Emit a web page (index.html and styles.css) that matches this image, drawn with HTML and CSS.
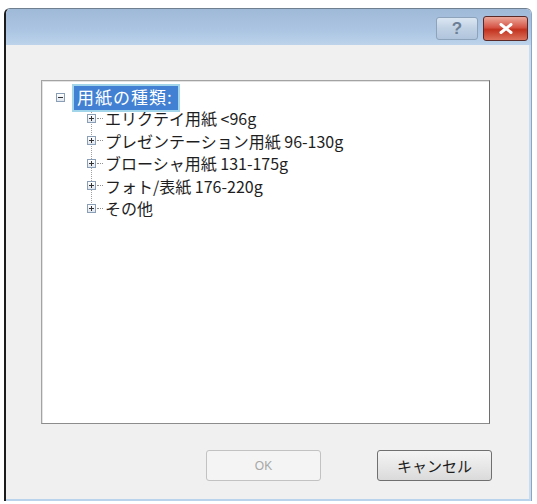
FILE: index.html
```html
<!DOCTYPE html>
<html lang="ja">
<head>
    <meta charset="UTF-8">
    <title>用紙の種類</title>
    <link rel="stylesheet" href="styles.css">
</head>
<body>

    <div class="window">
        <div class="titlebar">
            <div class="tb-btn help">?</div>
            <div class="tb-btn close">
                <svg width="14" height="11" viewBox="0 0 14 11">
                    <path d="M2 1.5 L12 9.5 M12 1.5 L2 9.5" stroke="#fff" stroke-width="3" stroke-linecap="round"/>
                </svg>
            </div>
        </div>

        <div class="content">
            <div class="tree">
                <div class="root-row">
                    <span class="expander minus"></span>
                    <span class="root-label">用紙の種類:</span>
                </div>
                <ul class="children">
                    <li><span class="expander plus"></span><span class="dash"></span><span class="item">エリクテイ用紙 &lt;96g</span></li>
                    <li><span class="expander plus"></span><span class="dash"></span><span class="item">プレゼンテーション用紙 96-130g</span></li>
                    <li><span class="expander plus"></span><span class="dash"></span><span class="item">ブローシャ用紙 131-175g</span></li>
                    <li><span class="expander plus"></span><span class="dash"></span><span class="item">フォト/表紙 176-220g</span></li>
                    <li><span class="expander plus"></span><span class="dash"></span><span class="item">その他</span></li>
                </ul>
            </div>

            <div class="buttons">
                <button class="btn" disabled>OK</button>
                <button class="btn">キャンセル</button>
            </div>
        </div>
    </div>

</body>
</html>
```

FILE: styles.css
```css
body {
    margin: 0;
    background-color: #fff;
    font-family: "Noto Sans CJK JP", "Liberation Sans", sans-serif;
}

.window {
    margin: 8px 0 0 4px;
    width: 528px;
    height: 493px;
    box-sizing: border-box;
    border-left: 2px solid #1c1c1c;
    border-top: 1px solid #6f7f90;
    border-right: 1px solid #8aa6c4;
    border-radius: 6px 6px 0 0;
    display: flex;
    flex-direction: column;
    overflow: hidden;
}

.titlebar {
    height: 36px;
    flex: none;
    background: linear-gradient(#9fb9d8, #abc5e2 60%, #bdd3eb);
    display: flex;
    justify-content: flex-end;
    align-items: flex-start;
    gap: 5px;
    padding: 7px 3px 0 0;
    box-sizing: border-box;
}

.tb-btn {
    height: 24px;
    box-sizing: border-box;
    border-radius: 3px;
    display: flex;
    align-items: center;
    justify-content: center;
}
.help {
    width: 42px;
    margin-top: 1px;
    height: 23px;
    border: 1px solid #8da2bb;
    background: linear-gradient(#dbe6f2, #c0d1e4 50%, #b0c4dc);
    color: #6d7f95;
    font-family: "Liberation Sans", sans-serif;
    font-weight: bold;
    font-size: 17px;
}
.close {
    width: 45px;
    height: 25px;
    border: 1px solid #5a2a28;
    background: linear-gradient(#eba99c, #d65546 45%, #c2321f 55%, #dc725c);
}

.content {
    flex: 1;
    background-color: #f0f0f0;
    border-right: 2px solid #c9dcef;
    border-bottom: 2px solid #b9d3ec;
    padding: 35px 0 0 35px;
    display: flex;
    flex-direction: column;
}

.tree {
    width: 449px;
    height: 344px;
    box-sizing: border-box;
    background-color: #fff;
    border: 1px solid #a3a3a3;
    border-right-color: #6e6e6e;
    border-bottom-color: #8c8c8c;
    box-shadow: inset 1px 1px 0 #e3e3e3;
    padding: 3px 0 0 14px;
    color: #1e1e1e;
    font-size: 16px;
}

.root-row {
    display: flex;
    align-items: center;
    height: 26px;
    position: relative;
    z-index: 1;
}
.root-label {
    margin-left: 7px;
    height: 28px;
    margin-top: 2px;
    padding: 0 5px 0 3px;
    box-sizing: border-box;
    background-color: #4180d3;
    border: 2px solid #a3d5ea;
    color: #fff;
    font-size: 17px;
    line-height: 22px;
    letter-spacing: 1px;
}

.expander {
    width: 9px;
    height: 9px;
    box-sizing: border-box;
    border: 1px solid #8a9fb6;
    background: linear-gradient(#fff, #dfe6ee);
    position: relative;
    flex: none;
}
.expander::before {
    content: "";
    position: absolute;
    left: 1px;
    top: 3px;
    width: 5px;
    height: 1px;
    background-color: #333;
}
.plus::after {
    content: "";
    position: absolute;
    left: 3px;
    top: 1px;
    width: 1px;
    height: 5px;
    background-color: #333;
}

.children {
    list-style: none;
    margin: -3px 0 0 31px;
    padding: 0;
    position: relative;
}
.children::before {
    content: "";
    position: absolute;
    left: 4px;
    top: 0;
    height: 100px;
    border-left: 1px dotted #a0a0a0;
}
.children li {
    display: flex;
    align-items: center;
    height: 22.5px;
    position: relative;
}
.dash {
    width: 6px;
    border-top: 1px dotted #909090;
    margin: 0 2px 0 1px;
}
.item {
    white-space: nowrap;
}

.buttons {
    display: flex;
    justify-content: flex-end;
    gap: 56px;
    margin: 26px 37px 0 0;
}
.btn {
    width: 115px;
    height: 31px;
    border: 1px solid #707070;
    border-radius: 3px;
    background: linear-gradient(#f4f4f4, #e8e8e8 50%, #dadada);
    font-family: "Noto Sans CJK JP", sans-serif;
    font-size: 15px;
    color: #1e1e1e;
    padding: 0;
}
.btn:disabled {
    border-color: #c2c2c2;
    background: #f4f4f4;
    color: #a8a8a8;
    font-family: "Liberation Sans", sans-serif;
    font-size: 12px;
}
```
